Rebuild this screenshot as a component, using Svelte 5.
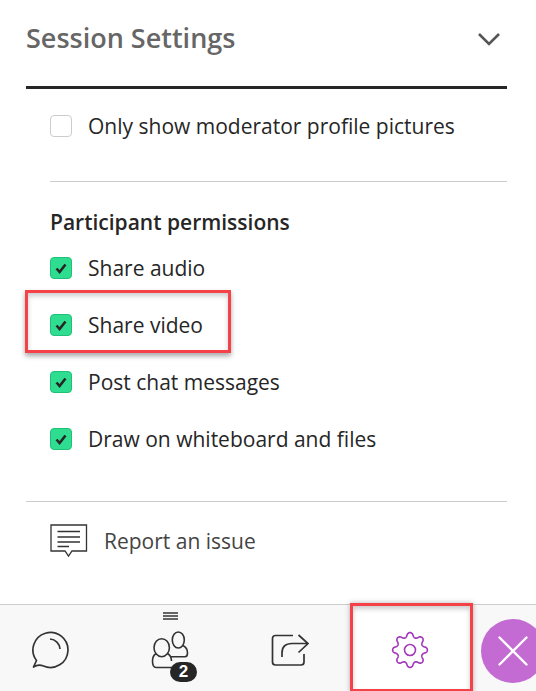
<script>
    let permissions = [
        { label: 'Share audio', highlight: false },
        { label: 'Share video', highlight: true },
        { label: 'Post chat messages', highlight: false },
        { label: 'Draw on whiteboard and files', highlight: false }
    ];

    // rounded cog outline, 8 lobes, first lobe on top
    function gearPath(cx, cy, mid, amp) {
        let pts = [];
        for (let i = 0; i < 240; i++) {
            let a = (i / 240) * Math.PI * 2;
            let w = Math.cos(8 * a);
            let r = mid + amp * Math.sign(w) * Math.pow(Math.abs(w), 0.7);
            let x = cx + r * Math.sin(a);
            let y = cy - r * Math.cos(a);
            pts.push(x.toFixed(2) + ' ' + y.toFixed(2));
        }
        return 'M' + pts.join(' L') + ' Z';
    }

    let gear = gearPath(19, 19, 15.2, 2.2);
</script>

<div class="page">
    <div class="panel">
        <header class="head">
            <h1>Session Settings</h1>
            <svg class="chevron" width="24" height="14" viewBox="0 0 24 14">
                <path d="M2 2 L12 12 L22 2" fill="none" stroke="#555" stroke-width="2.6" />
            </svg>
        </header>

        <div class="section">
            <label class="row">
                <span class="box"></span>
                <span>Only show moderator profile pictures</span>
            </label>
        </div>

        <div class="section perms">
            <h2>Participant permissions</h2>
            {#each permissions as p}
                <label class="row perm" class:marked={p.highlight}>
                    <span class="box on">
                        <svg width="14" height="13" viewBox="0 0 14 13">
                            <path d="M2.500 6.500 L5.600 10 L11.500 2.500" fill="none" stroke="#262626" stroke-width="2.600" />
                        </svg>
                    </span>
                    <span>{p.label}</span>
                </label>
            {/each}
        </div>

        <div class="report">
            <svg width="38" height="34" viewBox="0 0 38 34">
                <path d="M1 1 H36.500 V27 H22 L18.500 32 L15 27 H1 Z" fill="none" stroke="#333" stroke-width="1.300" />
                <path d="M7.500 7.500 H30 M7.500 13 H30 M7.500 18 H30 M7.500 22.500 H19" stroke="#333" stroke-width="1.300" />
            </svg>
            <span>Report an issue</span>
        </div>
    </div>

    <nav class="tabs">
        <div class="grip"></div>
        <button class="tab chat" aria-label="Chat">
            <svg width="40" height="40" viewBox="0 0 40 40">
                <path d="M3.500 37 L6.500 30.500 A17.500 17.500 0 1 1 13.500 36 Q8 34 3.500 37 Z" fill="none" stroke="#333" stroke-width="1.700" stroke-linejoin="round" />
                <path d="M20 9 A10.500 10.500 0 0 1 30 19" fill="none" stroke="#333" stroke-width="1.700" />
            </svg>
        </button>
        <button class="tab people" aria-label="Participants">
            <svg width="38" height="40" viewBox="0 0 38 40">
                <ellipse cx="27.300" cy="10" rx="6" ry="8" fill="none" stroke="#333" stroke-width="1.600" />
                <path d="M32 15.500 C35 17 36.500 19 36.500 23 Q36.500 26.700 34 26.700 H20" fill="none" stroke="#333" stroke-width="1.600" />
                <ellipse cx="10.700" cy="17.700" rx="7.700" ry="9" fill="#f8f8f8" stroke="#333" stroke-width="1.600" />
                <path d="M5 23.500 C2.500 25 1.500 27 1.500 31 C1.500 35.500 2.500 37.500 5 37.500 H22 M16.500 23.500 C19 25 20.500 27 20.500 31" fill="none" stroke="#333" stroke-width="1.600" />
            </svg>
            <span class="badge">2</span>
        </button>
        <button class="tab share" aria-label="Share">
            <svg width="38" height="36" viewBox="0 -2 38 36">
                <path d="M22 1.500 H4.500 Q1.500 1.500 1.500 4.500 V28 Q1.500 31 4.500 31 H30 Q33 31 33 28 V20" fill="none" stroke="#333" stroke-width="1.700" />
                <path d="M11 23 V19 Q11 9.500 21 9.500 H36.500 M27.500 1 L37 9.500 L27.500 18.500" fill="none" stroke="#333" stroke-width="1.700" />
            </svg>
        </button>
        <button class="tab gear" aria-label="Settings">
            <svg width="38" height="38" viewBox="0 0 38 38">
                <path d={gear} fill="none" stroke="#a238ba" stroke-width="1.600" stroke-linejoin="round" />
                <circle cx="19" cy="19" r="5.500" fill="none" stroke="#a238ba" stroke-width="1.600" />
            </svg>
        </button>
        <button class="close" aria-label="Close">
            <svg width="32" height="32" viewBox="0 0 32 32">
                <path d="M2.500 2.500 L29.500 29.500 M29.500 2.500 L2.500 29.500" stroke="#fff" stroke-width="2.400" stroke-linecap="round" />
            </svg>
        </button>
        <div class="mark"></div>
    </nav>
</div>

<style>
    :global(body) {
        margin: 0;
        background: #fff;
    }

    .page {
        width: 536px;
        height: 691px;
        display: flex;
        flex-direction: column;
        overflow: hidden;
        font-family: "Open Sans", sans-serif;
        color: #262626;
    }

    .panel {
        flex: 1;
        padding: 0 29px 0 26px;
    }

    .head {
        display: flex;
        justify-content: space-between;
        align-items: center;
        padding-bottom: 12px;
        box-sizing: border-box;
        border-bottom: 3px solid #262626;
        height: 89px;
    }

    h1 {
        margin: 0;
        font-size: 27px;
        font-weight: 600;
        color: #666;
    }

    .chevron {
        margin: 4px 6px 0 0;
    }

    .section {
        margin-left: 24px;
    }

    .row {
        display: flex;
        align-items: center;
        gap: 16px;
        font-size: 21px;
        height: 30px;
    }

    .section:first-of-type {
        padding: 22px 0 40px;
    }

    .box {
        width: 22px;
        height: 22px;
        box-sizing: border-box;
        border: 1px solid #ccc;
        border-radius: 4px;
        display: flex;
        align-items: center;
        justify-content: center;
    }

    .box.on {
        background: #2fdd91;
        border-color: #20c078;
    }

    .perms {
        border-top: 1px solid #ccc;
        padding-bottom: 20px;
    }

    h2 {
        margin: 25px 0 16px;
        font-size: 21px;
        font-weight: 600;
        line-height: 30px;
    }

    .perm {
        margin-bottom: 27px;
    }

    .perm.marked {
        position: relative;
    }

    .perm.marked::after {
        content: '';
        position: absolute;
        left: -25px;
        top: -20px;
        width: 206px;
        height: 63px;
        box-sizing: border-box;
        border: 3px solid #f44248;
        box-shadow: 0 3px 5px rgba(0, 0, 0, 0.35), inset 0 3px 5px rgba(0, 0, 0, 0.2);
    }

    .report {
        border-top: 1px solid #ccc;
        padding: 22px 0 0 24px;
        display: flex;
        align-items: center;
        gap: 16px;
        font-size: 21px;
        color: #444;
    }

    .tabs {
        position: relative;
        height: 87px;
        flex: none;
        box-sizing: border-box;
        border-top: 1px solid #ccc;
        background: #f8f8f8;
        display: flex;
        align-items: center;
    }

    .tab,
    .close {
        border: none;
        background: none;
        padding: 0;
        display: flex;
        align-items: center;
        justify-content: center;
    }

    .tab {
        width: 120px;
        height: 86px;
        position: relative;
    }

    .tab svg {
        margin-top: 4px;
    }

    .chat {
        width: 100px;
        margin-right: 10px;
    }

    .grip {
        position: absolute;
        left: 163px;
        top: 7px;
        width: 15px;
        height: 8px;
        background: repeating-linear-gradient(#666 0, #666 2px, transparent 2px, transparent 3px);
    }

    .badge {
        position: absolute;
        left: 60px;
        top: 57px;
        width: 27px;
        height: 20px;
        border-radius: 10px;
        background: #262626;
        color: #fff;
        font-size: 17px;
        font-weight: 800;
        line-height: 20px;
        text-align: center;
    }

    .gear {
        background: #fff;
    }

    .close {
        position: absolute;
        left: 481px;
        top: 14px;
        width: 64px;
        height: 64px;
        border-radius: 50%;
        background: #c36bd2;
    }

    .mark {
        position: absolute;
        left: 350px;
        top: -2px;
        width: 123px;
        height: 89px;
        box-sizing: border-box;
        border: 3px solid #f44248;
        box-shadow: 0 0 5px rgba(0, 0, 0, 0.3), inset 0 3px 5px rgba(0, 0, 0, 0.2);
    }
</style>
